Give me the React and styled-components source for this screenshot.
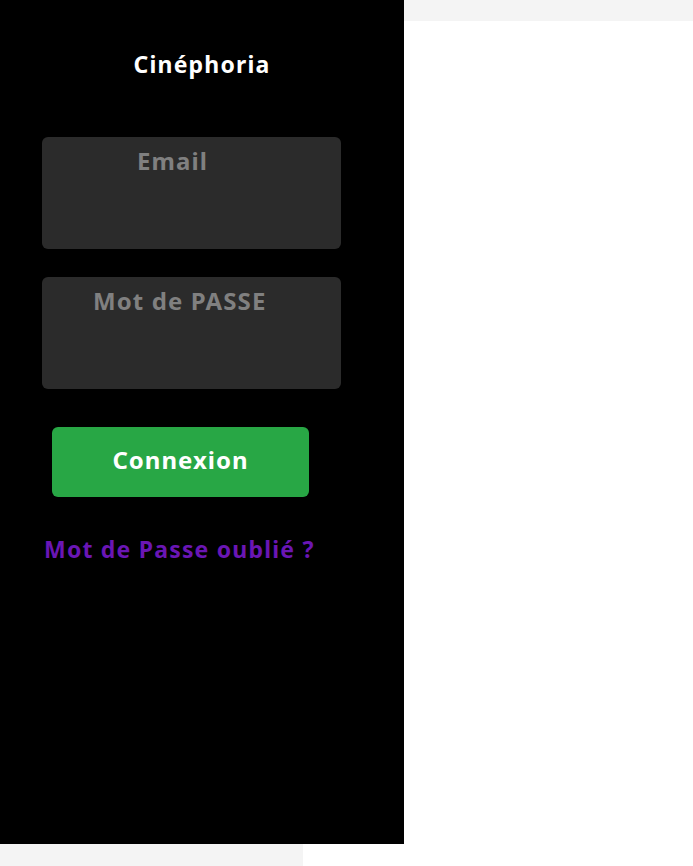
import styled, { createGlobalStyle } from "styled-components";

const GlobalStyle = createGlobalStyle`
  body {
    margin: 0;
    background: #ffffff;
    font-family: "Noto Sans", "Liberation Sans", sans-serif;
  }
`;

const Page = styled.div`
  width: 693px;
  display: flex;
  flex-direction: column;
`;

const Top = styled.div`
  display: flex;
  height: 844px;
`;

const Sidebar = styled.aside`
  width: 404px;
  flex-shrink: 0;
  background: #000;
  display: flex;
  flex-direction: column;
`;

const Main = styled.main`
  flex: 1;
  display: flex;
  flex-direction: column;
`;

const MainHeader = styled.div`
  height: 21px;
  background: #f4f4f4;
`;

const Bottom = styled.div`
  width: 303px;
  height: 22px;
  background: #f4f4f4;
`;

const Title = styled.h1`
  margin: 0;
  padding-top: 48px;
  text-align: center;
  color: #fff;
  font-size: 23px;
  font-weight: 700;
  letter-spacing: 1.2px;
  line-height: 32px;
`;

const Form = styled.form`
  display: flex;
  flex-direction: column;
  align-items: flex-start;
  padding: 57px 0 0 42px;
`;

const Field = styled.div`
  width: 299px;
  height: 112px;
  box-sizing: border-box;
  background: #2b2b2b;
  border-radius: 6px;
  margin-bottom: 28px;
  padding-top: 8px;
  padding-left: ${(p) => p.indent}px;
  color: #808080;
  font-size: 24px;
  font-weight: 700;
  letter-spacing: 1.1px;
  line-height: 32px;
`;

const Button = styled.button`
  margin: 10px 0 0 10px;
  width: 257px;
  height: 70px;
  padding: 0 0 5px;
  border: none;
  border-radius: 6px;
  background: #28a745;
  color: #fff;
  font-family: inherit;
  font-size: 24px;
  font-weight: 700;
  letter-spacing: 1px;
  cursor: pointer;
`;

const Forgot = styled.a`
  margin: 36px 0 0 2px;
  color: #6a16b4;
  font-size: 23px;
  font-weight: 700;
  letter-spacing: 1.2px;
  line-height: 32px;
  text-decoration: none;
`;

export default function App() {
  return (
    <Page>
      <GlobalStyle />
      <Top>
        <Sidebar>
          <Title>Cinéphoria</Title>
          <Form onSubmit={(e) => e.preventDefault()}>
            <Field indent={95}>Email</Field>
            <Field indent={51}>Mot de PASSE</Field>
            <Button type="submit">Connexion</Button>
            <Forgot href="#">Mot de Passe oublié ?</Forgot>
          </Form>
        </Sidebar>
        <Main>
          <MainHeader />
        </Main>
      </Top>
      <Bottom />
    </Page>
  );
}
